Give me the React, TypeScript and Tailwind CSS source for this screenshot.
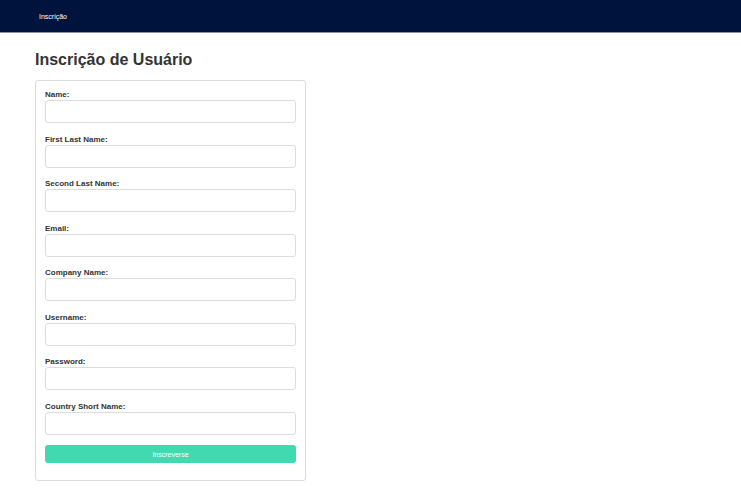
const fields = [
  'Name:',
  'First Last Name:',
  'Second Last Name:',
  'Email:',
  'Company Name:',
  'Username:',
  'Password:',
  'Country Short Name:',
];

export default function App() {
  return (
    <div className="min-h-screen bg-white font-['Liberation_Sans',Arial,sans-serif] text-[#333]">
      <header className="flex h-[33px] items-center border-b border-[#8a94a6] bg-[#00133d] px-[39px]">
        <span className="text-[7px] leading-none text-white">Inscrição</span>
      </header>

      <main className="px-[35px]">
        <h1 className="mt-[18px] mb-[11px] text-[16px] font-bold leading-[18px]">Inscrição de Usuário</h1>

        <form className="w-[271px] rounded-[3px] border border-[#dcdcdc] px-[9px] pt-[8px] pb-[17px]">
          {fields.map((f) => (
            <div key={f} className="mb-[10.5px]">
              <label className="block h-[11px] text-[8px] font-bold leading-[12px] text-[#333]">{f}</label>
              <input
                type="text"
                className="block h-[23px] w-[251px] rounded-[3px] border border-[#dcdcdc] bg-white"
              />
            </div>
          ))}
          <button
            type="button"
            className="mt-[3.5px] block h-[18px] w-[251px] rounded-[3px] bg-[#40d9b0] text-[7px] leading-none text-white"
          >
            Inscreverse
          </button>
        </form>
      </main>
    </div>
  );
}
